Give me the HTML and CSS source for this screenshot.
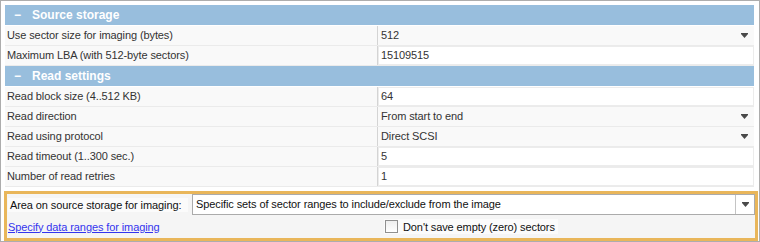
FILE: index.html
```html
<!DOCTYPE html>
<html lang="en">
<head>
    <meta charset="utf-8">
    <title>Imaging settings</title>
<link rel="stylesheet" href="styles.css">
</head>
<body>
<div class="frame">
    <section class="props">
        <div class="cat"><span class="toggle">&minus;</span>Source storage</div>
        <div class="row">
            <div class="name">Use sector size for imaging (bytes)</div>
            <div class="val drop">512<svg class="arrow" width="7" height="5" viewBox="0 0 7 5"><path d="M0 0h7v1H0zM0 1h7L3.5 5z" fill="#4a4a4a"/></svg></div>
        </div>
        <div class="row">
            <div class="name">Maximum LBA (with 512-byte sectors)</div>
            <div class="val box">15109515</div>
        </div>
        <div class="cat"><span class="toggle">&minus;</span>Read settings</div>
        <div class="row">
            <div class="name">Read block size (4..512 KB)</div>
            <div class="val box">64</div>
        </div>
        <div class="row">
            <div class="name">Read direction</div>
            <div class="val drop">From start to end<svg class="arrow" width="7" height="5" viewBox="0 0 7 5"><path d="M0 0h7v1H0zM0 1h7L3.5 5z" fill="#4a4a4a"/></svg></div>
        </div>
        <div class="row">
            <div class="name">Read using protocol</div>
            <div class="val drop">Direct SCSI<svg class="arrow" width="7" height="5" viewBox="0 0 7 5"><path d="M0 0h7v1H0zM0 1h7L3.5 5z" fill="#4a4a4a"/></svg></div>
        </div>
        <div class="row">
            <div class="name">Read timeout (1..300 sec.)</div>
            <div class="val box">5</div>
        </div>
        <div class="row">
            <div class="name">Number of read retries</div>
            <div class="val box">1</div>
        </div>
    </section>

    <section class="area">
        <div class="area-top">
            <span class="lbl">Area on source storage for imaging:</span>
            <div class="combo">
                <span class="combo-text">Specific sets of sector ranges to include/exclude from the image</span>
                <span class="combo-btn"><svg width="7" height="5" viewBox="0 0 7 5"><path d="M0 0h7v1H0zM0 1h7L3.5 5z" fill="#4a4a4a"/></svg></span>
            </div>
        </div>
        <div class="area-bottom">
            <a href="#" class="link">Specify data ranges for imaging</a>
            <label class="chk"><span class="chk-box"></span>Don't save empty (zero) sectors</label>
        </div>
    </section>
</div>
</body>
</html>
```

FILE: styles.css
```css
body{
    margin: 0;
    font-family: "Liberation Sans", Arial, sans-serif;
    font-size: 11px;
    letter-spacing: -0.1px;
    color: #333;
    background: #fff;
}
.frame{
    width: 760px;
    height: 242px;
    box-sizing: border-box;
    border: 1px solid #adadad;
    padding: 4px 4px 0 4px;
    background: #fff;
}
.cat{
    height: 20px;
    line-height: 20px;
    margin-bottom: 1px;
    background: #98bedd;
    color: #fff;
    font-weight: bold;
    font-size: 12px;
    letter-spacing: 0;
    margin-right: 1px;
}
.toggle{
    display: inline-block;
    width: 27px;
    padding-left: 9px;
    box-sizing: border-box;
}
.row{
    display: grid;
    grid-template-columns: 373px 1fr;
    height: 20px;
    box-sizing: border-box;
    border-bottom: 1px solid #ebebeb;
    background: #f9f9f9;
    margin-right: 1px;
}
.name{
    line-height: 19px;
    padding-left: 2px;
    border-right: 1px solid #d4d4d4;
}
.val{
    line-height: 19px;
    padding-left: 3px;
    display: flex;
    align-items: center;
    justify-content: space-between;
}
.val.box{
    background: #fff;
    box-shadow: inset 0 0 0 1px #ececec;
}
.arrow{
    margin-right: 6px;
}
.area{
    margin: 4px -3px 0 -1px;
    height: 50px;
    box-sizing: border-box;
    border: 3px solid #e9b65a;
    background: #f5f5f5;
}
.area-top{
    display: flex;
    align-items: center;
    height: 21px;
}
.lbl{
    background: #fbfbfb;
    padding: 1px 2px;
    margin-left: 1px;
    width: 180px;
    box-sizing: border-box;
    white-space: nowrap;
    color: #111;
}
.combo{
    margin-left: 4px;
    flex: 1;
    height: 21px;
    box-sizing: border-box;
    border: 1px solid #ababab;
    background: #fff;
    display: flex;
}
.combo-text{
    flex: 1;
    line-height: 19px;
    padding-left: 3px;
    color: #111;
}
.combo-btn{
    width: 18px;
    border-left: 1px solid #c4c4c4;
    display: flex;
    align-items: center;
    justify-content: center;
}
.area-bottom{
    display: flex;
    align-items: center;
    height: 23px;
}
.link{
    color: #3434ee;
    margin-left: 1px;
    width: 376px;
}
.chk{
    display: flex;
    align-items: center;
    background: #fbfbfb;
    padding: 1px 3px 1px 1px;
    color: #111;
}
.chk-box{
    width: 11px;
    height: 11px;
    border: 1px solid #8f8f8f;
    background: linear-gradient(#eee, #fff);
    margin-right: 5px;
}
```
